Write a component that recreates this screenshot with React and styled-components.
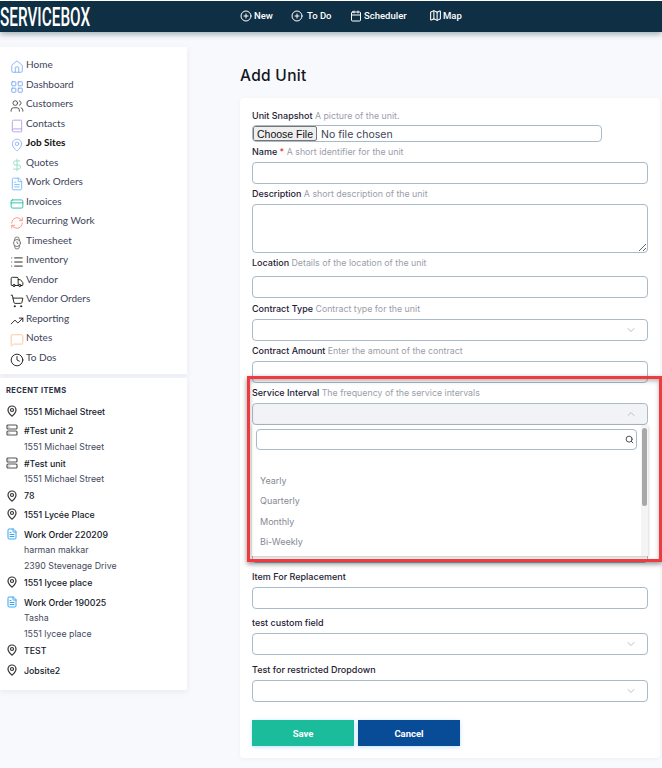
import React from 'react'
import styled, { createGlobalStyle } from 'styled-components'
import {
  Home, LayoutGrid, Users, Book, MapPin, DollarSign, FileText, CreditCard, RefreshCw, Watch,
  List, Truck, ShoppingCart, TrendingUp, MessageSquare, Clock, CirclePlus, Calendar, Map,
  Search, ChevronDown, ChevronUp, Server,
} from 'lucide-react'

const GlobalStyle = createGlobalStyle`
  html, body {
    margin: 0;
    height: 100%;
    background: #f8f9fc;
    overflow: hidden;
  }
  * { box-sizing: border-box; }
  body { font-family: 'Inter', 'Liberation Sans', sans-serif; color: #2a2f45; }
`

const Header = styled.header`
  height: 32px;
  background: #0f3044;
  border-top: 1px solid #fff;
  box-shadow: 0 2px 6px rgba(15, 48, 68, 0.4);
  display: flex;
  align-items: center;
  position: relative;
`
const Logo = styled.div`
  width: 240px;
  span {
    display: inline-block;
    font-family: 'Roboto', sans-serif;
    font-weight: 500;
    font-size: 26px;
    line-height: 30px;
    color: #fff;
    transform: scaleX(0.59);
    transform-origin: left center;
  }
`
const TopNav = styled.nav`
  display: flex;
  font-family: 'Roboto', sans-serif;
  font-weight: 500;
  font-size: 9.5px;
  color: #fff;
  margin-top: -2px;
`
const TopLink = styled.a`
  display: flex;
  align-items: center;
  gap: ${p => p.$gap ?? 2}px;
  width: ${p => p.$w}px;
`
const Shell = styled.div`
  display: flex;
`
const Sidebar = styled.aside`
  width: 187px;
  padding-top: 15px;
  display: flex;
  flex-direction: column;
  gap: 4px;
`
const Panel = styled.section`
  background: #fff;
  box-shadow: 0 2px 6px rgba(90, 100, 180, 0.1);
  padding: ${p => p.$pad};
`
const NavRow = styled.div`
  height: 19.5px;
  display: flex;
  align-items: center;
  gap: 2px;
  font-family: 'Lato', sans-serif;
  font-size: 10px;
  font-weight: ${p => (p.$active ? 700 : 400)};
  color: ${p => (p.$active ? '#111' : '#3c4358')};
  svg { flex: none; margin-top: 3px; }
  span { margin-top: -3px; }
`
const RecentTitle = styled.h4`
  margin: 0 0 5px;
  font-size: 7.5px;
  line-height: 10px;
  font-weight: 700;
  letter-spacing: 0.4px;
  color: #2a2f45;
`
const RecentRow = styled.div`
  display: flex;
  align-items: center;
  gap: 6px;
  height: ${p => p.$h || 16}px;
  margin-top: ${p => p.$top || 0}px;
  font-size: 8.8px;
  font-weight: 500;
  color: #14182a;
  svg { flex: none; }
`
const SubRow = styled.div`
  height: 16px;
  line-height: 16px;
  padding-left: 18px;
  font-size: 8.8px;
  color: #454b60;
`
const Main = styled.main`
  margin-left: 53px;
  width: 420px;
`
const Title = styled.h1`
  margin: 0;
  height: 66px;
  padding-top: 34px;
  font-size: 15.5px;
  line-height: 20px;
  font-weight: 500;
  letter-spacing: 0.3px;
  color: #14161f;
`
const Card = styled.form`
  position: relative;
  background: #fff;
  border-radius: 4px;
  padding: 12px;
  height: 660px;
  box-shadow: 0 1px 4px rgba(90, 100, 180, 0.06);
`
const Field = styled.div`
  position: relative;
  margin-bottom: ${p => p.$after ?? 4}px;
`
const Label = styled.div`
  height: 12px;
  line-height: 12px;
  margin-bottom: ${p => p.$gap ?? 4}px;
  font-size: 9px;
  font-weight: 500;
  color: #1d2133;
  white-space: nowrap;
  em { font-style: normal; font-weight: 400; font-size: 8.8px; color: #9a9ea9; }
  i { font-style: normal; color: #e53935; }
`
const boxStyles = `
  display: block;
  width: 396px;
  background: #fff;
  border: 1px solid #a9bac8;
  border-radius: 4px;
`
const Input = styled.input`
  ${boxStyles}
  height: 22px;
`
const TextArea = styled.textarea`
  ${boxStyles}
  height: 49px;
  resize: both;
`
const FileInput = styled.input`
  ${boxStyles}
  width: 350px;
  height: 17px;
  padding: 0;
  font-family: 'Inter', sans-serif;
  font-size: 10.5px;
  color: #3c4358;
  overflow: hidden;
  &::file-selector-button {
    height: 15px;
    margin-right: 4px;
    padding: 0 3px;
    font-family: 'Liberation Sans', sans-serif;
    font-size: 10.5px;
    background: #efefef;
    border: 1px solid #767676;
    border-radius: 2px;
    color: #111;
  }
`
const SelectBox = styled.div`
  ${boxStyles}
  height: 22px;
  display: flex;
  align-items: center;
  justify-content: flex-end;
  padding-right: 10px;
  color: #b9bec9;
  background: ${p => (p.$open ? '#f1f3f6' : '#fff')};
`
const Dropdown = styled.div`
  position: absolute;
  z-index: 2;
  top: 38px;
  left: 0;
  width: 396px;
  height: 131px;
  background: #fff;
  box-shadow: 0 1px 3px rgba(0, 0, 0, 0.25);
  padding: 4px 11px 0 4px;
`
const SearchBox = styled.div`
  height: 21px;
  border: 1px solid #a9bac8;
  border-radius: 4px;
  display: flex;
  align-items: center;
  justify-content: flex-end;
  padding-right: 2px;
  color: #444;
`
const OptionRow = styled.div`
  height: 20.6px;
  line-height: 20.6px;
  padding-left: 4px;
  font-size: 9px;
  color: #858a95;
`
const ScrollTrack = styled.div`
  position: absolute;
  top: 0;
  right: 0;
  bottom: 0;
  width: 7px;
  background: #f4f4f4;
`
const ScrollThumb = styled.div`
  margin: 3px 1px 0;
  height: 78px;
  border-radius: 3px;
  background: #a8a8a8;
`
const Highlight = styled.div`
  position: absolute;
  z-index: 3;
  top: -11px;
  left: -5px;
  width: 415px;
  height: 186px;
  border: 3.5px solid #ee3b3f;
  pointer-events: none;
  box-shadow: 0 2px 5px rgba(0, 0, 0, 0.45), inset 0 2px 4px rgba(0, 0, 0, 0.3);
`
const Actions = styled.div`
  display: flex;
  gap: 4px;
  margin-top: 18px;
`
const Button = styled.button`
  width: 102px;
  height: 26px;
  border: 0;
  background: ${p => p.$bg};
  color: #fff;
  font-family: 'Roboto', sans-serif;
  font-size: 9.5px;
  font-weight: 700;
  box-shadow: 0 1px 4px rgba(80, 170, 255, 0.35);
`

const navItems = [
  ['Home', Home, '#78aef5'],
  ['Dashboard', LayoutGrid, '#6fa3ef'],
  ['Customers', Users, '#444'],
  ['Contacts', Book, '#b19be0'],
  ['Job Sites', MapPin, '#8fb0f5', true],
  ['Quotes', DollarSign, '#8edcc4'],
  ['Work Orders', FileText, '#6fb8f9'],
  ['Invoices', CreditCard, '#1cbc9c'],
  ['Recurring Work', RefreshCw, '#ff8a7a'],
  ['Timesheet', Watch, '#666'],
  ['Inventory', List, '#111'],
  ['Vendor', Truck, '#111'],
  ['Vendor Orders', ShoppingCart, '#111'],
  ['Reporting', TrendingUp, '#111'],
  ['Notes', MessageSquare, '#fbc28c'],
  ['To Dos', Clock, '#111'],
]

const Pin = () => <MapPin size={12} color="#333" strokeWidth={2.4} />
const Unit = () => <Server size={12} color="#555" strokeWidth={2.4} />
const Doc = () => <FileText size={12} color="#35a7f2" strokeWidth={2} />

function Recent() {
  return (
    <Panel $pad="8px 6px 10px">
      <RecentTitle>RECENT ITEMS</RecentTitle>
      <RecentRow $h={20}><Pin />1551 Michael Street</RecentRow>
      <RecentRow $h={18}><Unit />#Test unit 2</RecentRow>
      <SubRow>1551 Michael Street</SubRow>
      <RecentRow><Unit />#Test unit</RecentRow>
      <SubRow>1551 Michael Street</SubRow>
      <RecentRow $h={17}><Pin />78</RecentRow>
      <RecentRow $h={20}><Pin />1551 Lycée Place</RecentRow>
      <RecentRow $top={2}><Doc />Work Order 220209</RecentRow>
      <SubRow>harman makkar</SubRow>
      <SubRow>2390 Stevenage Drive</SubRow>
      <RecentRow><Pin />1551 lycee place</RecentRow>
      <RecentRow $top={4}><Doc />Work Order 190025</RecentRow>
      <SubRow>Tasha</SubRow>
      <SubRow>1551 lycee place</SubRow>
      <RecentRow><Pin />TEST</RecentRow>
      <RecentRow $top={2} $h={20}><Pin />Jobsite2</RecentRow>
    </Panel>
  )
}

function App() {
  return (
    <>
      <GlobalStyle />
      <Header>
        <Logo><span>SERVICEBOX</span></Logo>
        <TopNav>
          <TopLink $w={51}><CirclePlus size={12} />New</TopLink>
          <TopLink $w={59} $gap={4}><CirclePlus size={12} />To Do</TopLink>
          <TopLink $w={79}><Calendar size={12} />Scheduler</TopLink>
          <TopLink $w={40} $gap={1}><Map size={13} />Map</TopLink>
        </TopNav>
      </Header>
      <Shell>
        <Sidebar>
          <Panel $pad="9px 0 6px 10px">
            {navItems.map(([name, Icon, color, active]) => (
              <NavRow key={name} $active={active}>
                <Icon size={14} color={color} strokeWidth={1.5} />
                <span>{name}</span>
              </NavRow>
            ))}
          </Panel>
          <Recent />
        </Sidebar>
        <Main>
          <Title>Add Unit</Title>
          <Card>
            <Field>
              <Label $gap={3}>Unit Snapshot <em>A picture of the unit.</em></Label>
              <FileInput type="file" />
            </Field>
            <Field>
              <Label>Name <i>*</i> <em>A short identifier for the unit</em></Label>
              <Input />
            </Field>
            <Field>
              <Label>Description <em>A short description of the unit</em></Label>
              <TextArea />
            </Field>
            <Field $after={5}>
              <Label $gap={7}>Location <em>Details of the location of the unit</em></Label>
              <Input />
            </Field>
            <Field>
              <Label>Contract Type <em>Contract type for the unit</em></Label>
              <SelectBox><ChevronDown size={12} /></SelectBox>
            </Field>
            <Field>
              <Label>Contract Amount <em>Enter the amount of the contract</em></Label>
              <Input />
            </Field>
            <Field $after={8}>
              <Label>Service Interval <em>The frequency of the service intervals</em></Label>
              <SelectBox $open><ChevronUp size={12} /></SelectBox>
              <Dropdown>
                <SearchBox><Search size={9} strokeWidth={2.5} /></SearchBox>
                <OptionRow>&nbsp;</OptionRow>
                <OptionRow>Yearly</OptionRow>
                <OptionRow>Quarterly</OptionRow>
                <OptionRow>Monthly</OptionRow>
                <OptionRow>Bi-Weekly</OptionRow>
                <ScrollTrack><ScrollThumb /></ScrollTrack>
              </Dropdown>
              <Highlight />
            </Field>
            <Field $after={8}><Label>&nbsp;</Label><Input /></Field>
            <Field $after={8}><Label>&nbsp;</Label><Input /></Field>
            <Field $after={8}><Label>&nbsp;</Label><Input /></Field>
            <Field $after={8}>
              <Label>Item For Replacement</Label>
              <Input />
            </Field>
            <Field $after={9}>
              <Label>test custom field</Label>
              <SelectBox><ChevronDown size={12} /></SelectBox>
            </Field>
            <Field $after={0}>
              <Label>Test for restricted Dropdown</Label>
              <SelectBox><ChevronDown size={12} /></SelectBox>
            </Field>
            <Actions>
              <Button type="button" $bg="#1abc9c">Save</Button>
              <Button type="button" $bg="#084b96">Cancel</Button>
            </Actions>
          </Card>
        </Main>
      </Shell>
    </>
  )
}

export default App
